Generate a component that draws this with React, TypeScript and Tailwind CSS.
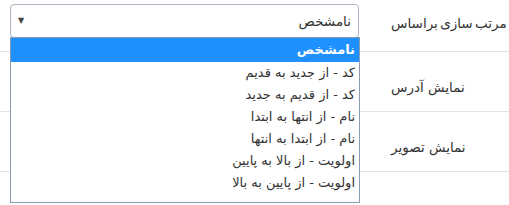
const options = [
  'نامشخص',
  'کد - از جدید به قدیم',
  'کد - از قدیم به جدید',
  'نام - از انتها به ابتدا',
  'نام - از ابتدا به انتها',
  'اولویت - از بالا به پایین',
  'اولویت - از پایین به بالا',
];

export default function App() {
  return (
    <div
      dir="rtl"
      className="relative w-[509px] h-[205px] overflow-hidden bg-white text-[#333] font-['DejaVu_Sans',sans-serif]"
    >
      {/* row: sort */}
      <div className="flex h-[52px] border-b border-[#e3e3e3]">
        <div className="w-[118px] pt-[13px] text-left text-[13.5px] leading-[20px] whitespace-nowrap [word-spacing:-2px]">
          مرتب سازی براساس
        </div>
        <div className="flex-1 pt-[4px] pl-[10px] pr-[32px]">
          <div className="flex h-[34px] items-center justify-between rounded-[4px] border border-[#a9b5c3] bg-white pr-[7px] pl-[7px] text-[13.5px]">
            <span>نامشخص</span>
            <span className="text-[8px] leading-none text-[#444]">▼</span>
          </div>
        </div>
      </div>

      {/* row: address */}
      <div className="flex h-[60px] border-b border-[#e3e3e3]">
        <div className="w-[118px] pt-[25px] text-left text-[13.5px] leading-[20px] whitespace-nowrap">نمایش آدرس</div>
        <div className="flex-1" />
      </div>

      {/* row: image */}
      <div className="flex h-[60px] border-b border-[#e3e3e3]">
        <div className="w-[118px] pt-[25px] text-left text-[13.5px] leading-[20px] whitespace-nowrap">نمایش تصویر</div>
        <div className="flex-1" />
      </div>

      {/* open select list */}
      <ul className="absolute left-[10px] top-[37px] w-[350px] border border-[#8c9cb0] bg-white pb-[8px] text-[13px]">
        {options.map((o, i) => (
          <li
            key={o}
            className={
              i === 0
                ? 'h-[24px] bg-[#1e90ff] pr-[4px] leading-[24px] font-bold text-white'
                : 'h-[22px] pr-[4px] leading-[22px]'
            }
          >
            {o}
          </li>
        ))}
      </ul>
    </div>
  );
}
